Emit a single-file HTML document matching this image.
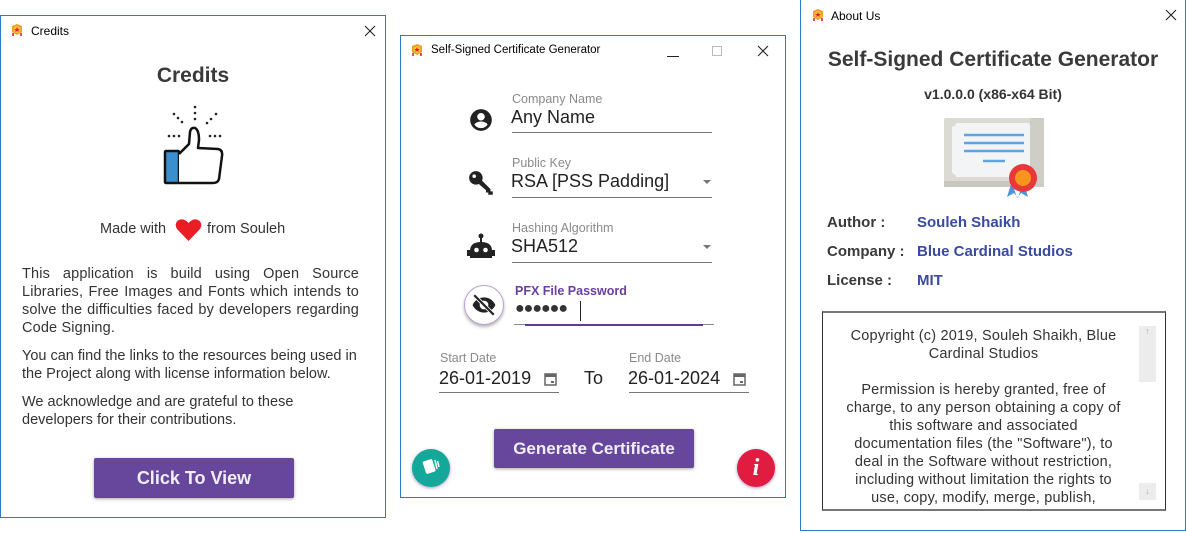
<!DOCTYPE html>
<html><head><meta charset="utf-8"><style>
*{box-sizing:border-box;margin:0;padding:0}
body{width:1186px;height:533px;background:#fff;position:relative;overflow:hidden;font-family:"Liberation Sans",sans-serif;color:#333}
.win{position:absolute;border:1px solid #2b7bc4;background:#fff}
.t{position:absolute;font-size:12px;color:#000}
.a{position:absolute;white-space:nowrap}
.x{position:absolute}
.lbl{position:absolute;font-size:12.5px;color:#8a8a8a}
.val{position:absolute;font-size:18px;color:#222}
.ul{position:absolute;height:1px;background:#777}
.btn{position:absolute;background:#66479c;color:#f2eef8;font-size:18px;font-weight:bold;text-align:center;border-radius:2px;box-shadow:0 1px 3px rgba(0,0,0,.35)}
.blue{color:#3a4aa0}
.tri{position:absolute;width:0;height:0;border-left:4px solid transparent;border-right:4px solid transparent;border-top:4px solid #777}
</style></head><body>

<svg width="0" height="0" style="position:absolute"><defs>
<g id="ico"><path d="M7 1 L12 3 L12 9 L7 12 L2 9 L2 3Z" fill="#f0a020"/><circle cx="7" cy="6.5" r="3.5" fill="#f7c040"/><path d="M7 4 L7.8 6 L9.8 6 L8.2 7.2 L8.8 9 L7 7.9 L5.2 9 L5.8 7.2 L4.2 6 L6.2 6Z" fill="#e02030"/><path d="M3 10 L3 13 M11 10 L11 13" stroke="#e02030" stroke-width="1.6"/></g>
<g id="cx"><path d="M1 1L11 11M11 1L1 11" stroke="#222" stroke-width="1.1"/></g>
</defs></svg>

<!-- Credits window -->
<div class="win" style="left:0;top:15px;width:386px;height:503px">
<svg style="position:absolute;left:9px;top:7px" width="14" height="14"><use href="#ico"/></svg>
<div class="t" style="left:30px;top:8px">Credits</div>
<svg class="x" style="left:363px;top:9px" width="12" height="12"><use href="#cx"/></svg>
<div class="a" style="left:0;width:384px;text-align:center;top:48px;font-size:21px;font-weight:bold;color:#3a3a3a">Credits</div>
<svg style="position:absolute;left:160px;top:86px" width="66" height="100" viewBox="0 0 66 100">
<g fill="#222"><circle cx="34" cy="5" r="1.3"/><circle cx="34" cy="11" r="1.3"/><circle cx="34" cy="17" r="1.3"/><circle cx="13" cy="12" r="1.3"/><circle cx="17" cy="16" r="1.3"/><circle cx="21" cy="20" r="1.3"/><circle cx="55" cy="12" r="1.3"/><circle cx="50" cy="17" r="1.3"/><circle cx="46" cy="21" r="1.3"/><circle cx="8" cy="34" r="1.3"/><circle cx="13" cy="34" r="1.3"/><circle cx="18" cy="34" r="1.3"/><circle cx="49" cy="34" r="1.3"/><circle cx="54" cy="34" r="1.3"/><circle cx="59" cy="34" r="1.3"/></g>
<rect x="4" y="49" width="14" height="32" fill="#3a8fcf" stroke="#111" stroke-width="2.5" rx="1"/>
<path d="M18 52 L28 42 L29 30 Q30 25 34 26 Q38 28 38 38 L37 46 L57 47 Q62 48 61 54 L58 77 Q57 81 52 81 L18 81" fill="#fff" stroke="#111" stroke-width="2.5" stroke-linejoin="round"/>
</svg>
<div class="a" style="left:99px;top:205px;font-size:14.5px">Made with</div>
<svg style="position:absolute;left:174px;top:202px" width="27" height="24" viewBox="0 0 27 24"><path d="M13.5 23 L2 11 Q-1 6 3 2.5 Q8 -1 13.5 5 Q19 -1 24 2.5 Q28 6 25 11Z" fill="#ea1c24"/></svg>
<div class="a" style="left:206px;top:205px;font-size:14.5px">from Souleh</div>
<div class="a" style="left:21px;top:249px;width:337px;white-space:normal;font-size:14.5px;letter-spacing:.15px;line-height:18px;text-align:justify">This application is build using Open Source Libraries, Free Images and Fonts which intends to solve the difficulties faced by developers regarding Code Signing.</div>
<div class="a" style="left:21px;top:331px;width:345px;white-space:normal;font-size:14.5px;line-height:18px">You can find the links to the resources being used in the Project along with license information below.</div>
<div class="a" style="left:21px;top:377px;width:300px;white-space:normal;font-size:14.5px;line-height:18px">We acknowledge and are grateful to these developers for their contributions.</div>
<div class="btn" style="left:93px;top:442px;width:200px;height:40px;line-height:40px">Click To View</div>
</div>

<!-- Generator window -->
<div class="win" style="left:400px;top:35px;width:386px;height:463px">
<svg style="position:absolute;left:9px;top:7px" width="14" height="14"><use href="#ico"/></svg>
<div class="t" style="left:30px;top:8px;font-size:11.5px">Self-Signed Certificate Generator</div>
<div class="a" style="left:266px;top:20px;width:12px;height:1px;background:#222"></div>
<div class="a" style="left:311px;top:10px;width:10px;height:10px;border:1px solid #bbb"></div>
<svg class="x" style="left:356px;top:9px" width="12" height="12"><use href="#cx"/></svg>
<svg style="position:absolute;left:67px;top:71px" width="26" height="26" viewBox="0 0 24 24"><path fill="#222" d="M12 2A10 10 0 1 0 12 22A10 10 0 1 0 12 2ZM12 5.5A3.5 3.5 0 1 1 12 12.5A3.5 3.5 0 1 1 12 5.5ZM12 19.5C9.5 19.5 7.3 18.3 6 16.4C6.1 14.5 10 13.4 12 13.4C14 13.4 17.9 14.5 18 16.4C16.7 18.3 14.5 19.5 12 19.5Z"/></svg>
<svg style="position:absolute;left:67px;top:134px" width="27" height="27" viewBox="0 0 24 24"><circle cx="7" cy="7" r="6" fill="#222"/><path d="M8 11 L11 8 L20 17 L20 19 L22 19 L22 22 L18 22 L18 20 L16 20 L16 18 Z" fill="#222"/><circle cx="5.5" cy="5.5" r="1.6" fill="#fff"/></svg>
<svg style="position:absolute;left:66px;top:196px" width="28" height="30" viewBox="0 0 28 30"><circle cx="14" cy="4" r="2.5" fill="#222"/><rect x="13" y="5" width="2" height="5" fill="#222"/><path d="M3 26 L3 19 Q3 10 14 10 Q25 10 25 19 L25 26Z" fill="#222"/><rect x="0" y="18" width="3" height="6" fill="#222"/><rect x="25" y="18" width="3" height="6" fill="#222"/><circle cx="9.5" cy="18" r="2.3" fill="#fff"/><circle cx="18.5" cy="18" r="2.3" fill="#fff"/></svg>
<div class="a" style="left:63px;top:249px;width:40px;height:40px;border-radius:50%;background:#fff;border:1px solid #b9a3d6;box-shadow:0 2px 3px rgba(0,0,0,.3)"></div>
<svg style="position:absolute;left:70px;top:256px" width="26" height="26" viewBox="0 0 24 24"><path fill="#222" d="M12 5C6 5 2.5 9.5 1.5 12C2.5 14.5 6 19 12 19C18 19 21.5 14.5 22.5 12C21.5 9.5 18 5 12 5ZM12 8A4 4 0 1 1 12 16A4 4 0 1 1 12 8Z"/><path d="M3 3L21 21" stroke="#fff" stroke-width="3.5"/><path d="M3 3L21 21" stroke="#222" stroke-width="2"/></svg>
<div class="lbl" style="left:111px;top:56px">Company Name</div>
<div class="val" style="left:110px;top:71px">Any Name</div>
<div class="ul" style="left:111px;top:96px;width:200px"></div>
<div class="lbl" style="left:111px;top:120px">Public Key</div>
<div class="val" style="left:110px;top:135px">RSA [PSS Padding]</div>
<div class="tri" style="left:302px;top:144px"></div>
<div class="ul" style="left:111px;top:161px;width:200px"></div>
<div class="lbl" style="left:111px;top:185px">Hashing Algorithm</div>
<div class="val" style="left:110px;top:200px">SHA512</div>
<div class="tri" style="left:302px;top:209px"></div>
<div class="ul" style="left:111px;top:226px;width:200px"></div>
<div class="lbl" style="left:114px;top:248px;color:#6b3fa0;font-weight:bold">PFX File Password</div>
<div class="a" style="left:114px;top:264px;font-size:16px;color:#333;letter-spacing:-1px">●●●●●●</div>
<div class="a" style="left:179px;top:265px;width:1px;height:20px;background:#222"></div>
<div class="ul" style="left:113px;top:288px;width:200px;background:#888"></div>
<div class="a" style="left:124px;top:288px;width:178px;height:2px;background:#5d3a9b"></div>
<div class="lbl" style="left:39px;top:315px">Start Date</div>
<div class="val" style="left:38px;top:332px">26-01-2019</div>
<div class="ul" style="left:38px;top:356px;width:120px"></div>
<div class="lbl" style="left:228px;top:315px">End Date</div>
<div class="val" style="left:227px;top:332px">26-01-2024</div>
<div class="ul" style="left:228px;top:356px;width:120px"></div>
<div class="val" style="left:183px;top:332px">To</div>
<svg style="position:absolute;left:143px;top:336px" width="13" height="14" viewBox="0 0 13 14"><rect x="1" y="2" width="11" height="11" fill="none" stroke="#666" stroke-width="1.5"/><rect x="1" y="2" width="11" height="3" fill="#666"/><rect x="7" y="9" width="3" height="2" fill="#666"/></svg>
<svg style="position:absolute;left:332px;top:336px" width="13" height="14" viewBox="0 0 13 14"><rect x="1" y="2" width="11" height="11" fill="none" stroke="#666" stroke-width="1.5"/><rect x="1" y="2" width="11" height="3" fill="#666"/><rect x="7" y="9" width="3" height="2" fill="#666"/></svg>
<div class="btn" style="left:93px;top:393px;width:200px;height:39px;line-height:39px;font-size:17px">Generate Certificate</div>
<div class="a" style="left:11px;top:413px;width:38px;height:38px;border-radius:50%;background:#14a89b;box-shadow:0 1px 3px rgba(90,40,140,.5)"></div>
<svg style="position:absolute;left:19px;top:420px" width="22" height="22" viewBox="0 0 22 22"><rect x="4" y="4" width="10" height="13" rx="1.5" fill="#fff" transform="rotate(-18 9 10)"/><path d="M15 4 L17 13 M17.5 5 L19 11" stroke="#fff" stroke-width="1.5"/></svg>
<div class="a" style="left:336px;top:413px;width:38px;height:38px;border-radius:50%;background:#e01c40;box-shadow:0 1px 3px rgba(90,40,140,.5);color:#fff;font:italic bold 24px 'Liberation Serif',serif;text-align:center;line-height:38px">i</div>
</div>

<!-- About window -->
<div class="win" style="left:800px;top:0;width:386px;height:531px;border-top:none">
<svg style="position:absolute;left:10px;top:8px" width="14" height="14"><use href="#ico"/></svg>
<div class="t" style="left:30px;top:9px">About Us</div>
<svg class="x" style="left:364px;top:9px" width="12" height="12"><use href="#cx"/></svg>
<div class="a" style="left:0;width:384px;text-align:center;top:48px;font-size:21px;font-weight:bold;color:#3a3a3a">Self-Signed Certificate Generator</div>
<div class="a" style="left:0;width:384px;text-align:center;top:86px;font-size:14px;font-weight:bold;color:#333">v1.0.0.0 (x86-x64 Bit)</div>
<svg style="position:absolute;left:143px;top:117px" width="102" height="82" viewBox="0 0 102 82">
<rect x="0" y="1" width="100" height="69" rx="2" fill="#dcdbd3"/>
<rect x="0" y="64" width="100" height="6" fill="#c8c7bf"/>
<path d="M8 10 Q12 9 12 6 L85 6 Q85 9 89 10 L89 56 Q85 57 85 60 L12 60 Q12 57 8 56Z" fill="#f3f4f6"/>
<rect x="86" y="1" width="14" height="69" fill="#cfcec6"/>
<g stroke="#5ea4de" stroke-width="2.5"><line x1="20" y1="18" x2="80" y2="18"/><line x1="20" y1="26" x2="80" y2="26"/><line x1="20" y1="34" x2="80" y2="34"/><line x1="39" y1="44" x2="61" y2="44"/></g>
<path d="M67 67 L63 80 L70 76 L74 81 L78 68Z M80 67 L84 80 L77 76 L73 81 L69 68Z" fill="#4b97d8"/>
<circle cx="79" cy="61" r="14" fill="#e8383a"/><circle cx="79" cy="61" r="8" fill="#f7941d"/>
</svg>
<div class="a" style="left:26px;top:214px;font-size:15px;font-weight:bold;color:#3a3a3a">Author :</div>
<div class="a blue" style="left:116px;top:214px;font-size:15px;font-weight:bold">Souleh Shaikh</div>
<div class="a" style="left:26px;top:243px;font-size:15px;font-weight:bold;color:#3a3a3a">Company :</div>
<div class="a blue" style="left:116px;top:243px;font-size:15px;font-weight:bold">Blue Cardinal Studios</div>
<div class="a" style="left:26px;top:272px;font-size:15px;font-weight:bold;color:#3a3a3a">License :</div>
<div class="a blue" style="left:116px;top:272px;font-size:15px;font-weight:bold">MIT</div>
<div class="a" style="left:21px;top:311px;width:344px;height:200px;border:1px solid #333;border-top:2px solid #777;border-bottom:2px solid #777;overflow:hidden">
<div class="a" style="left:316px;top:13px;width:17px;height:56px;background:#ececec;color:#aaa;font-size:9px;text-align:center">↑</div>
<div class="a" style="left:316px;top:170px;width:17px;height:17px;background:#ececec;color:#aaa;font-size:9px;text-align:center;line-height:17px">↓</div>
<div class="a" style="left:19px;top:14px;width:283px;white-space:normal;text-align:center;font-size:14.5px;letter-spacing:.2px;line-height:18px;color:#333">Copyright (c) 2019, Souleh Shaikh, Blue Cardinal Studios<br><br>Permission is hereby granted, free of charge, to any person obtaining a copy of this software and associated documentation files (the "Software"), to deal in the Software without restriction, including without limitation the rights to use, copy, modify, merge, publish, distribute,</div>
</div>
</div>
</body></html>
